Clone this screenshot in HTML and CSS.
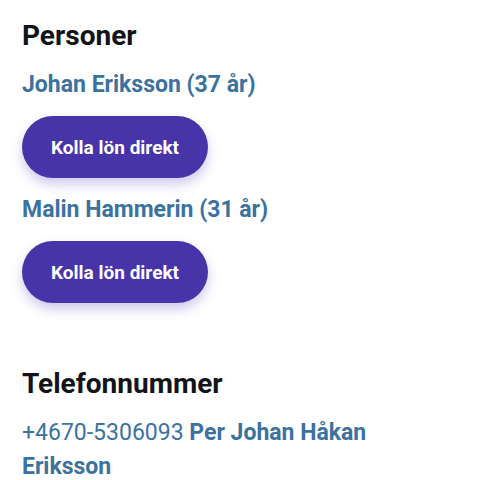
FILE: index.html
```html
<!DOCTYPE html>
<html lang="sv">
<head>
<meta charset="utf-8">
<link rel="stylesheet" href="styles.css">
</head>
<body>
<main class="page">
  <section class="section">
    <h2 class="heading">Personer</h2>
    <div class="person">
      <a class="person-name">Johan Eriksson (37 år)</a>
      <button class="btn">Kolla lön direkt</button>
    </div>
    <div class="person">
      <a class="person-name">Malin Hammerin (31 år)</a>
      <button class="btn">Kolla lön direkt</button>
    </div>
  </section>
  <section class="section phones">
    <h2 class="heading">Telefonnummer</h2>
    <p class="phone"><span class="num">+4670-5306093</span> <b class="owner">Per Johan Håkan Eriksson</b></p>
  </section>
</main>
</body>
</html>
```
FILE: styles.css
```css
html, body { margin: 0; padding: 0; background: #fff; }
body { font-family: Roboto, "Noto Sans", sans-serif; }
.page { padding: 19px 22px 0 22px; }
.heading {
  margin: 0;
  font-size: 28px;
  line-height: 34px;
  font-weight: 700;
  color: #111418;
}
.person { display: flex; flex-direction: column; align-items: flex-start; }
.person-name {
  margin-top: 17px;
  font-size: 23px;
  line-height: 30px;
  font-weight: 700;
  color: #3b72a0;
}
.btn {
  margin-top: 16px;
  height: 62px;
  padding: 0 29px;
  border: none;
  border-radius: 31px;
  background: #4634a8;
  color: #fff;
  font-family: Roboto, sans-serif;
  font-size: 19px;
  font-weight: 700;
  box-shadow: 0 6px 12px rgba(80, 60, 190, 0.28);
}
.phones { margin-top: 64px; }
.phone {
  margin: 15px 0 0 0;
  font-size: 23px;
  line-height: 34px;
  color: #3b72a0;
}
.owner { font-weight: 700; }
```
